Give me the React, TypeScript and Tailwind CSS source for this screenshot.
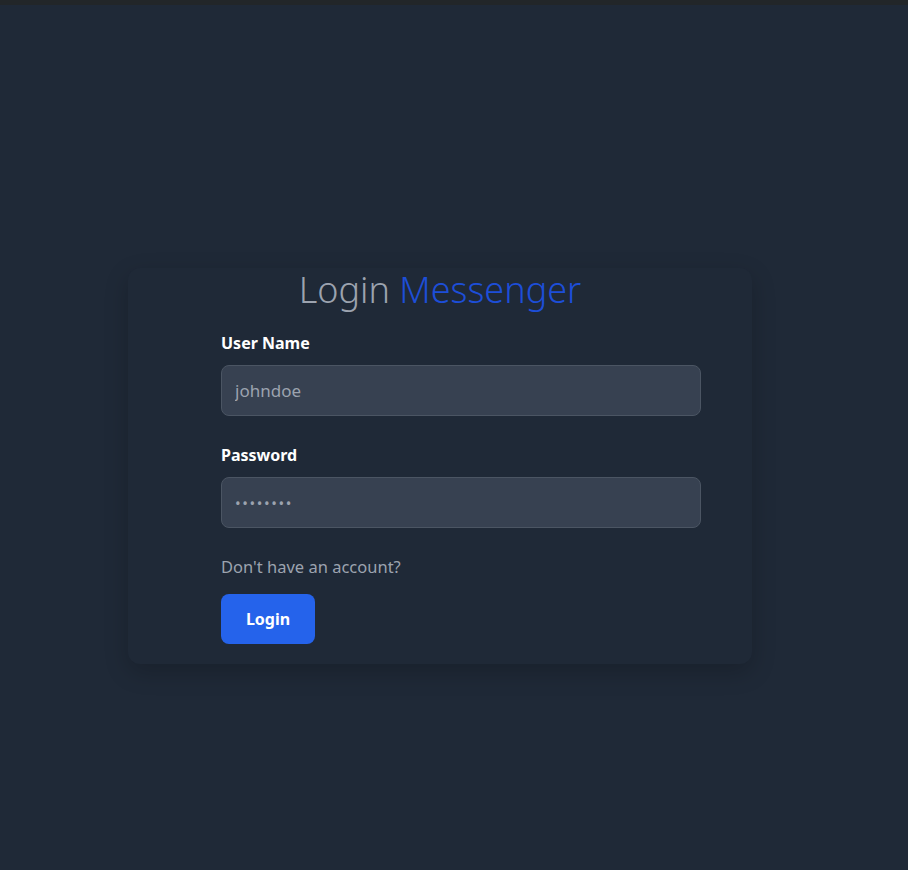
const App = () => (
  <div className="min-h-screen bg-[#1f2937] font-['Noto_Sans',sans-serif]">
    <div className="h-[5px] bg-[#222629]" />
    <div className="pl-[128px] pt-[263px]">
      <div className="w-[624px] rounded-xl bg-[#1f2937] pt-[2px] pb-[20px] shadow-[0_8px_24px_rgba(0,0,0,0.2)]">
        <h1 className="h-[40px] text-center text-[36px] leading-[40px] font-light text-[#9ca3af]">
          Login <span className="text-[#1d4ed8]">Messenger</span>
        </h1>
        <form className="ml-[93px] mt-[21px] w-[480px]" onSubmit={(e) => e.preventDefault()}>
          <label className="block text-base leading-6 font-bold text-white">User Name</label>
          <input
            type="text"
            placeholder="johndoe"
            className="mt-[10px] block h-[51px] w-full rounded-lg border border-[#4b5563] bg-[#374151] px-[13px] text-[17px] text-white placeholder:text-[#9ca3af] outline-none"
          />
          <label className="mt-[27px] block text-base leading-6 font-bold text-white">Password</label>
          <input
            type="password"
            placeholder="••••••••"
            className="mt-[10px] block h-[51px] w-full rounded-lg border border-[#4b5563] bg-[#374151] px-[13px] text-[15px] tracking-[1.6px] text-white placeholder:text-[#9ca3af] outline-none"
          />
          <p className="mt-[27px] text-[16.5px] leading-6 text-[#9ca3af]">Don't have an account?</p>
          <button
            type="submit"
            className="mt-[15px] h-[50px] w-[94px] rounded-lg bg-[#2563eb] text-base font-bold text-white"
          >
            Login
          </button>
        </form>
      </div>
    </div>
  </div>
)

export default App
